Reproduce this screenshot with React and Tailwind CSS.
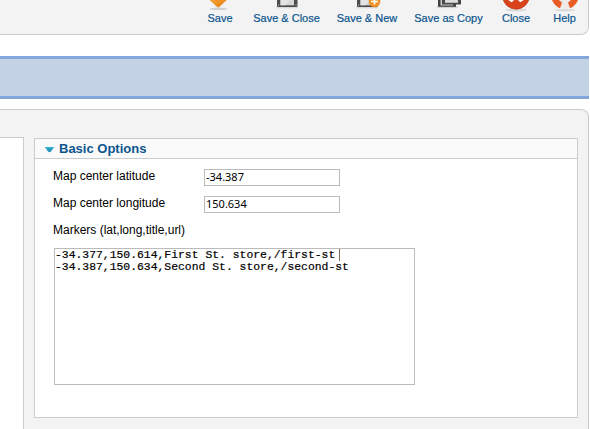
import React from 'react';

function SaveIcon() {
  return (
    <svg width="32" height="11" viewBox="0 0 32 11" className="block">
      <defs>
        <linearGradient id="arrow" x1="0" y1="0" x2="1" y2="1">
          <stop offset="0" stopColor="#f9a73c" />
          <stop offset="1" stopColor="#e47808" />
        </linearGradient>
      </defs>
      <ellipse cx="14.500" cy="8.800" rx="9" ry="1.200" fill="#cfcfcf" />
      <path d="M6 0H22.500L15.500 6.600Q14.300 7.600 13 6.600Z" fill="url(#arrow)" stroke="#e58a25" strokeWidth=".5" />
    </svg>
  );
}

function DiskIcon({ plus }) {
  return (
    <svg width="32" height="11" viewBox="0 0 32 11" className="block">
      <rect x="5" y="6.500" width="22" height="1.800" fill="#d8d8d8" />
      <path d="M6 0H26.500V6Q26.500 7 25.500 7H7Q6 7 6 6Z" fill="#4c4c4c" />
      <path d="M9.500 0H23V5.300H9.500Z" fill="#d6d6d6" />
      <path d="M9.500 0H19L14 5.300H9.500Z" fill="#e3e3e3" />
      <path d="M7.200 4.500h1v1.200h-1zM24.500 4.500h1v1.200h-1z" fill="#bbb" />
      {plus && (
        <g>
          <circle cx="23.500" cy="1.500" r="5.500" fill="#f39325" stroke="#dd7a16" strokeWidth=".5" />
          <path d="M23.500 -2V4.500M20 1.500H27" stroke="#fff" strokeWidth="1.700" />
        </g>
      )}
    </svg>
  );
}

function CopyIcon() {
  return (
    <svg width="32" height="11" viewBox="0 0 32 11" className="block">
      <rect x="4" y="6.500" width="21" height="1.600" fill="#d0d0d0" />
      <path d="M5 0H23V6.800H5Z" fill="#424242" />
      <path d="M7.500 0H20V5.500H7.500Z" fill="#c9c9c9" />
      <path d="M9 0H28V4.500H9Z" fill="#484848" />
      <path d="M12 0H25V2.800H12Z" fill="#dcdcdc" />
    </svg>
  );
}

function CloseIcon() {
  return (
    <svg width="32" height="12" viewBox="0 0 32 12" className="block">
      <ellipse cx="16" cy="10" rx="11" ry="1.500" fill="#d9d9d9" />
      <circle cx="16" cy="-4.200" r="13.400" fill="#d9431b" stroke="#bd300e" strokeWidth=".6" />
      <path d="M10.300 -.5L11.500 .1L13 -1.400M21.700 -.5L20.500 .1L19 -1.400" fill="none" stroke="#fff" strokeWidth="3.400" strokeLinecap="round" />
    </svg>
  );
}

function HelpIcon() {
  return (
    <svg width="32" height="12" viewBox="0 0 32 12" className="block">
      <ellipse cx="16" cy="10.200" rx="10" ry="1.300" fill="#d9d9d9" />
      <circle cx="16" cy="-4.500" r="9" fill="none" stroke="#eeeae8" strokeWidth="8" />
      <path d="M3 0L9.500 -1Q10.300 1 13 2.500L11 8.300Q5.500 6 3 0Z" fill="#e85c24" />
      <path d="M29 0L22.500 -1Q21.700 1 19 2.500L21 8.300Q26.500 6 29 0Z" fill="#e85c24" />
    </svg>
  );
}

function ToolButton({ className, icon, label }) {
  return (
    <div className={'flex shrink-0 flex-col items-center whitespace-nowrap ' + className}>
      <div className="h-[11px]">{icon}</div>
      <span className="text-[11px] leading-[14px] [-webkit-text-stroke:0.2px_#0b558e]">{label}</span>
    </div>
  );
}

function Field({ label, value }) {
  return (
    <div className="flex h-[27px] items-start">
      <label className="w-[151px] text-[12px] leading-[14px]">{label}</label>
      <div className="h-[17px] w-[136px] border border-[#bbb] bg-white pl-px font-['Noto_Sans',sans-serif] text-[11px] leading-[14px]">
        {value}
      </div>
    </div>
  );
}

export default function App() {
  return (
    <div className="flex h-[429px] w-[590px] flex-col overflow-hidden bg-white font-['Liberation_Sans',Arial,sans-serif] text-black">
      <header className="flex h-[35px] w-[589px] shrink-0 rounded-br-[8px] border-r border-b border-[#ccc] bg-[#f3f3f3] pl-[200px] text-[#0b558e]">
        <ToolButton className="w-[40px]" icon={<SaveIcon />} label="Save" />
        <ToolButton className="w-[93px]" icon={<DiskIcon />} label="Save & Close" />
        <ToolButton className="w-[68px]" icon={<DiskIcon plus />} label="Save & New" />
        <ToolButton className="w-[95px]" icon={<CopyIcon />} label="Save as Copy" />
        <ToolButton className="w-[40px]" icon={<CloseIcon />} label="Close" />
        <ToolButton className="w-[57px]" icon={<HelpIcon />} label="Help" />
      </header>

      <div className="mt-[21px] h-[43px] w-[589px] shrink-0 border-y-[3px] border-[#84a7db] bg-[#c3d2e5]" />

      <main className="mt-[10px] flex h-[330px] w-[589px] shrink-0 rounded-tr-[8px] border-t border-r border-[#ccc] bg-[#f3f3f3]">
        <aside className="mt-[27px] w-[24px] shrink-0 border-t border-r border-[#ccc] bg-white" />
        <section className="mt-[28px] ml-[10px] h-[280px] w-[544px] shrink-0 border border-[#ccc] bg-white">
          <h3 className="flex h-[20px] items-center border-b border-[#ccc] bg-[#fafafa] pl-[10px] text-[13px] font-bold text-[#0b558e]">
            <svg width="9" height="6" viewBox="0 0 9 6" className="mt-[3px] mr-[5px]">
              <path d="M0 0H9L6 4.500Q4.500 6 3 4.500Z" fill="#2299bd" />
              <path d="M0 0H9L8 1.500H1Z" fill="#38b4d8" />
            </svg>
            Basic Options
          </h3>
          <div className="pt-[10px] pl-[18px]">
            <Field label="Map center latitude" value="-34.387" />
            <Field label="Map center longitude" value="150.634" />
            <div className="text-[12px] leading-[14px]">Markers (lat,long,title,url)</div>
            <div className="mt-[11px] ml-px h-[137px] w-[361px] border border-[#bbb] bg-white font-['Liberation_Mono',monospace] text-[11.4px] leading-[12px] whitespace-pre [-webkit-text-stroke:0.2px_#000]">
              <div className="flex h-[12px]">
                -34.377,150.614,First St. store,/first-st
                <span className="ml-[4px] h-[12px] w-px bg-[#806b4d]" />
              </div>
              <div>-34.387,150.634,Second St. store,/second-st</div>
            </div>
          </div>
        </section>
      </main>
    </div>
  );
}
